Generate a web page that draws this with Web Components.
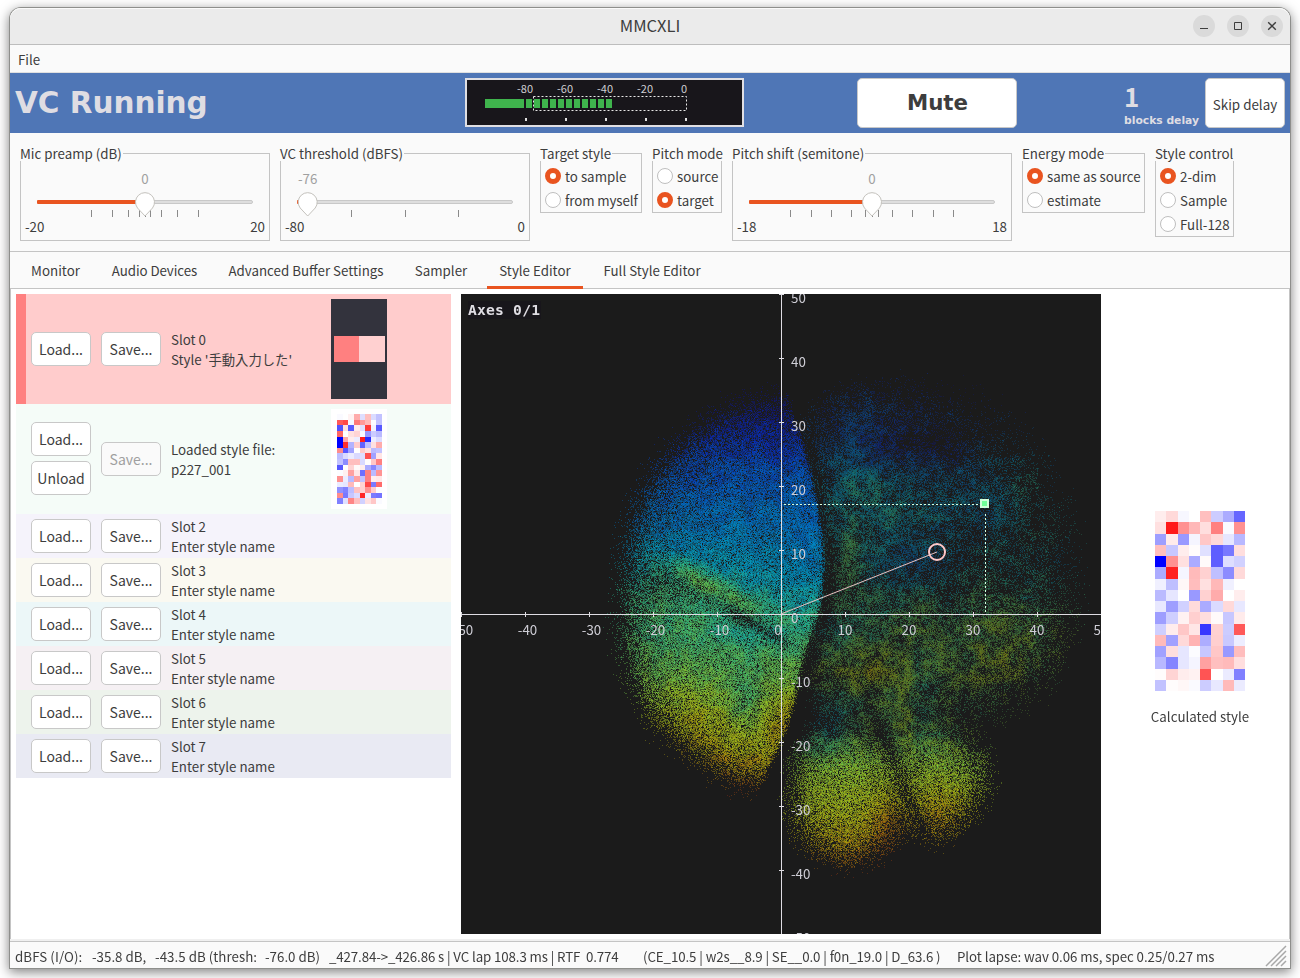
<!DOCTYPE html>
<html lang="en">
<head>
<meta charset="utf-8">
<title>MMCXLI</title>
<style>
html,body{margin:0;height:100%;background:#fff;overflow:hidden}
body{font:13.330px/20px "Noto Sans CJK JP","Noto Sans",sans-serif;color:#3d3d3d}
</style>
</head>
<body>
<mm-window></mm-window>
<script>
const define = (name, html, setup) => customElements.define(name, class extends HTMLElement {
  constructor() { super(); this.attachShadow({ mode: 'open' }); }
  connectedCallback() {
    const t = document.createElement('template');
    t.innerHTML = typeof html === 'function' ? html(this) : html;
    this.shadowRoot.replaceChildren(t.content.cloneNode(true));
    if (setup) setup(this, this.shadowRoot);
  }
});

/* ---------- title bar ---------- */
define('mm-titlebar', `<style>
:host{display:grid;grid-template-columns:1fr auto 1fr;align-items:center;height:36px;background:#ebebeb;border-bottom:1px solid #bdbdbd;box-shadow:inset 0 1px #fafafa;border-radius:11px 11px 0 0}
.t{font-size:16.500px;line-height:24px;padding-bottom:2px}
.b{display:flex;gap:12px;justify-content:flex-end;padding-right:7px}
svg{display:block}
</style><span></span><span class="t"><slot></slot></span>
<div class="b">
<svg width="22" height="22"><circle cx="11" cy="11" r="11" fill="#dadada"/><path d="M7 13.5h8" stroke="#3d3d3d"/></svg>
<svg width="22" height="22"><circle cx="11" cy="11" r="11" fill="#dadada"/><path d="M7.5 7.5h7v7h-7z" fill="none" stroke="#3d3d3d"/></svg>
<svg width="22" height="22"><circle cx="11" cy="11" r="11" fill="#dadada"/><path d="M7.2 7.2l7.6 7.6M14.8 7.2l-7.6 7.6" stroke="#3d3d3d" stroke-width="1.4"/></svg>
</div>`);

/* ---------- button ---------- */
define('mm-button', `<style>
:host{display:flex;box-sizing:border-box;width:60px;height:34px;align-items:center;justify-content:center;background:#fff;border:1px solid #c8c8c8;border-radius:5px;padding-bottom:1px;white-space:nowrap;font-size:14px}
:host([disabled]){background:#fafafa;color:#a0a0a0}
</style><slot></slot>`);

/* ---------- level meter ---------- */
define('mm-meter', () => {
  let s = '';
  for (let i = 0; i <= 10; i++) s += `<rect x="${61 + 8 * i}" y="21" width="6" height="9" fill="#3fb44d"/>`;
  [-80, -60, -40, -20, 0].forEach((v, i) => {
    s += `<text x="${[60, 100, 140, 180, 219][i]}" y="15" text-anchor="middle">${v}</text><rect x="${60 + 40 * i}" y="40" width="2" height="3" fill="#e0e0e0"/>`;
  });
  return `<style>:host{display:block;width:279px;height:49px}svg{display:block}text{font-size:11px;fill:#cfced3}</style>
<svg width="279" height="49"><rect x="1" y="1" width="277" height="47" fill="#18161b" stroke="#e0dfe3" stroke-width="2"/>
<rect x="20" y="21" width="39" height="9" fill="#3fb44d"/>${s}
<rect x="68.500" y="18.500" width="153" height="14" fill="none" stroke="#e8e8e8" stroke-dasharray="2 2"/></svg>`;
});

/* ---------- status banner ---------- */
define('mm-banner', `<style>
:host{display:grid;grid-template-columns:455px 392px 267px 1fr;height:60px;background:#4f76b6;color:#dfdde3;align-items:start;border-top:1px solid #e0e0e0}
h1{margin:0;font:bold 29.500px/36px "DejaVu Sans",sans-serif;padding:12px 0 0 5px}
mm-meter{margin-top:5px}
mm-button{margin-top:5px;height:50px;color:#3d3d3d}
.mute{width:160px;font:bold 21.330px/26px "DejaVu Sans",sans-serif;padding:0 0 0 1px}
.n b{display:block;font-size:26px;line-height:30px;padding-top:8px}
.n small{display:block;font:bold 10.750px/13px "DejaVu Sans",sans-serif;padding-top:3px;white-space:nowrap}
.d{display:grid;grid-template-columns:81px 80px}
.skip{width:80px;padding:1px 0 0;font-size:13.400px}
</style><h1>VC Running</h1><mm-meter></mm-meter><mm-button class="mute">Mute</mm-button>
<div class="d"><div class="n"><b>1</b><small>blocks delay</small></div><mm-button class="skip">Skip delay</mm-button></div>`);

/* ---------- group frame, radios, slider ---------- */
define('mm-group', `<style>
:host{display:block;position:relative;box-sizing:border-box;border:1px solid #c4c4c4}
.t{position:absolute;left:-1px;top:-11px;height:18px;line-height:22px;background:#fafafa;white-space:nowrap;padding-right:1px}
</style><span class="t"></span><slot></slot>`, (h, r) => r.querySelector('.t').textContent = h.getAttribute('label'));

define('mm-radio', `<style>
:host{display:flex;align-items:center;gap:4px;height:24px;padding-left:4px;white-space:nowrap}
i{box-sizing:border-box;flex:none;width:16px;height:16px;border-radius:50%;border:1px solid #bfbfbf;background:#fff}
:host([checked]) i{border:5.500px solid #e95420}
span{padding-top:2px}
</style><i></i><span><slot></slot></span>`);

define('mm-slider', h => {
  const a = n => h.getAttribute(n), w = +a('w'), x = +a('at');
  const ticks = a('ticks').split(' ').map(t => `<rect x="${t}" y="56" width="1" height="7" fill="#8a8a8a"/>`).join('');
  return `<style>:host{display:block}svg{display:block;overflow:visible}text{fill:#3d3d3d}</style>
<svg width="${w - 2}" height="86">${ticks}
<rect x="16.500" y="46.500" width="${w - 35}" height="3" rx="1.500" fill="#dedede" stroke="#c8c8c8"/>
<rect x="16" y="46" width="${x - 16}" height="4" rx="1" fill="#e95420"/>
<path d="M${x} 62L${x - 7.500} 54A9.500 9.500 0 1 1 ${x + 7.500} 54Z" fill="#fff" stroke="#c4c2bd"/>
<text x="${x}" y="30" text-anchor="middle" style="fill:#a0a0a0">${a('value')}</text>
<text x="4" y="78">${a('min')}</text><text x="${w - 6}" y="78" text-anchor="end">${a('max')}</text></svg>`;
});

define('mm-controls', `<style>
:host{display:flex;gap:10px;align-items:flex-start;height:98px;padding:20px 10px 0}
.s{width:250px;height:88px}.r{height:60px}
mm-radio:first-of-type{margin-top:10px}
</style>
<mm-group class="s" label="Mic preamp (dB)"><mm-slider w="250" at="124" value="0" min="-20" max="20" ticks="70 91 107 118 124 129 140 156 177"></mm-slider></mm-group>
<mm-group class="s" label="VC threshold (dBFS)"><mm-slider w="250" at="26.700" value="-76" min="-80" max="0" ticks="70 124 177"></mm-slider></mm-group>
<mm-group class="r" style="width:102px" label="Target style"><mm-radio checked>to sample</mm-radio><mm-radio style="letter-spacing:-.1px">from myself</mm-radio></mm-group>
<mm-group class="r" style="width:70px" label="Pitch mode"><mm-radio>source</mm-radio><mm-radio checked>target</mm-radio></mm-group>
<mm-group class="s" style="width:280px" label="Pitch shift (semitone)"><mm-slider w="280" at="139" value="0" min="-18" max="18" ticks="57 78 98 118 132 139 145 159 179 200 220"></mm-slider></mm-group>
<mm-group class="r" style="width:123px" label="Energy mode"><mm-radio checked style="letter-spacing:-.07px">same as source</mm-radio><mm-radio>estimate</mm-radio></mm-group>
<mm-group class="r" style="width:79px;height:84px" label="Style control"><mm-radio checked>2-dim</mm-radio><mm-radio>Sample</mm-radio><mm-radio>Full-128</mm-radio></mm-group>`);

/* ---------- tabs ---------- */
define('mm-tabs', `<style>
:host{display:flex;box-sizing:border-box;height:38px;border-top:1px solid #c4c4c4;border-bottom:1px solid #c4c4c4;padding-left:9px}
span{box-sizing:border-box;height:37px;line-height:38px;text-align:center;white-space:nowrap}
.on{border-bottom:3px solid #e95420}
</style><span style="width:73px">Monitor</span><span style="width:125px;letter-spacing:-.08px">Audio Devices</span><span style="width:178px">Advanced Buffer Settings</span><span style="width:92px">Sampler</span><span class="on" style="width:96px">Style Editor</span><span style="width:138px">Full Style Editor</span>`);

/* ---------- heat map ---------- */
const MAPS = {
  file: [[-2,0,5,33,-13,25,-14,-24],[65,72,-3,53,40,28,-1,-24],[-68,12,-65,8,-12,78,-5,-65],[60,0,12,17,-2,-40,-20,-27],[-100,35,7,-7,88,-83,-7,-14],[-100,82,-30,20,-62,-25,12,33],[45,-65,-37,0,20,12,-27,-24],[-26,-14,-8,-15,-13,68,-37,10],[-24,-45,25,25,-15,1,22,50],[-66,0,17,2,7,-33,-47,-27],[-1,6,37,10,-57,50,-27,42],[43,-7,-27,37,-24,50,7,9],[-8,-10,27,0,17,72,-52,58],[-43,-50,-26,24,18,43,20,-1],[45,-53,-22,-14,85,-7,-52,-55],[-50,-12,48,25,-18,12,22,-2]],
  calc: [[7,15,-3,0,25,-20,-33,-60],[12,90,43,28,13,50,-2,43],[-38,8,-40,-4,22,15,-10,-28],[25,-22,7,1,-12,-63,-53,13],[-100,43,12,-33,2,-63,-13,-18],[-33,87,-4,27,18,-25,-45,15],[-6,-25,3,26,12,28,-6,0],[-27,-10,0,-40,18,33,0,7],[-9,-38,-18,14,-33,-14,15,-9],[-38,-19,5,19,13,2,-22,8],[-19,7,22,10,-78,18,-20,65],[27,-37,15,30,-32,19,-21,-7],[-37,13,-10,-1,-22,22,-40,26],[-28,-48,-10,-4,37,25,27,13],[1,17,7,5,67,0,-8,-50],[-24,1,3,-2,-20,-9,27,-8]]
};
define('mm-heat', h => {
  const w = +h.getAttribute('w'), c = w / 8;
  const cells = MAPS[h.getAttribute('map')].map((row, y) => row.map((v, x) => {
    const k = Math.round(255 * (1 - Math.abs(v) / 100));
    return `<rect x="${x * c}" y="${y * c}" width="${c}" height="${c}" fill="${v > 0 ? `rgb(255,${k},${k})` : `rgb(${k},${k},255)`}"/>`;
  }).join('')).join('');
  return `<style>:host{display:block}svg{display:block}</style><svg width="${w}" height="${w * 2}" shape-rendering="crispEdges">${cells}</svg>`;
});

/* ---------- slot row ---------- */
define('mm-slot', `<style>
:host{display:grid;grid-template-columns:10px 65px 75px 165px 91px;align-items:center;height:44px;background:var(--bg)}
:host([tall]){height:110px}
.bar{align-self:stretch;background:var(--bar,transparent)}
.l{display:grid;gap:5px;margin-left:5px}
:host([pair]) .l{padding-bottom:1px}
.s{margin-left:10px}
.t{white-space:pre;margin-left:5px;padding-top:2px}
</style><div class="bar"></div><div class="l"><slot name="load"></slot></div><div class="s"><slot name="save"></slot></div><div class="t"><slot></slot></div><div class="p"><slot name="thumb"></slot></div>`);

define('mm-slots', () => {
  const bg = ['#f5f3fb', '#faf9f1', '#ecf7f8', '#f5f0f3', '#edf3ec', '#e9eaf3'];
  return `<style>
:host{display:block;width:435px}
.sw{box-sizing:border-box;width:56px;height:100px;background:#33333d;padding:37px 2px 37px 3px;display:grid;grid-template-columns:25px 26px}
.wh{box-sizing:border-box;width:56px;height:100px;background:#fff;padding:5px 6px}
</style>
<mm-slot tall style="--bg:#fcc;--bar:#ff8080"><mm-button slot="load">Load...</mm-button><mm-button slot="save">Save...</mm-button>Slot 0
Style '手動入力した'<div slot="thumb" class="sw"><i style="background:#ff8080"></i><i style="background:#ffd0d0"></i></div></mm-slot>
<mm-slot tall pair style="--bg:#f5fcf8"><mm-button slot="load">Load...</mm-button><mm-button slot="load">Unload</mm-button><mm-button slot="save" disabled>Save...</mm-button>Loaded style file:
p227_001<div slot="thumb" class="wh"><mm-heat w="45" map="file"></mm-heat></div></mm-slot>` +
    bg.map((c, i) => `<mm-slot style="--bg:${c}"><mm-button slot="load">Load...</mm-button><mm-button slot="save">Save...</mm-button>Slot ${i + 2}
Enter style name</mm-slot>`).join('');
});

/* ---------- scatter plot ---------- */
const JET = [[0,14,14,140],[.12,6,50,200],[.26,0,105,205],[.4,0,155,195],[.5,35,185,150],[.6,85,195,95],[.7,145,200,45],[.8,180,185,15],[.9,185,120,10],[1,150,35,20]];
const ramp = (tab, v) => {
  if (v <= tab[0][0]) return tab[0].slice(1);
  for (let i = 1; i < tab.length; i++) if (v <= tab[i][0]) {
    const a = tab[i - 1], b = tab[i], k = (v - a[0]) / (b[0] - a[0]);
    return a.slice(1).map((c, j) => c + (b[j + 1] - c) * k);
  }
  return tab[tab.length - 1].slice(1);
};
function paintCloud(cv) {
  const N = 640, OX = 461, OY = 294;
  let seed = 20231;
  const rnd = () => { seed = (seed + 0x6D2B79F5) | 0; let t = Math.imul(seed ^ seed >>> 15, 1 | seed); t = t + Math.imul(t ^ t >>> 7, 61 | t) ^ t; return ((t ^ t >>> 14) >>> 0) / 4294967296; };
  const layer = (shapes) => {
    const c = document.createElement('canvas'); c.width = c.height = N;
    const g = c.getContext('2d', { willReadFrequently: true });
    g.fillStyle = '#000'; g.fillRect(0, 0, N, N);
    g.translate(-OX, -OY);
    for (const [kind, val, blur, pts, width] of shapes) {
      g.filter = `blur(${blur}px)`;
      g.fillStyle = g.strokeStyle = val < 0 ? `rgba(0,0,0,${-val})` : `rgba(255,255,255,${val})`;
      g.beginPath();
      if (kind === 'e') g.ellipse(pts[0], pts[1], pts[2], pts[3], pts[4] || 0, 0, 7);
      else {
        const n = pts.length / 2;
        if (kind === 'p') {
          const m = i => [(pts[(i % n) * 2] + pts[((i + 1) % n) * 2]) / 2, (pts[(i % n) * 2 + 1] + pts[((i + 1) % n) * 2 + 1]) / 2];
          g.moveTo(...m(0));
          for (let i = 1; i <= n; i++) g.quadraticCurveTo(pts[(i % n) * 2], pts[(i % n) * 2 + 1], ...m(i));
        } else for (let i = 0; i < n; i++) g.lineTo(pts[i * 2], pts[i * 2 + 1]);
      }
      if (kind === 'l') { g.lineWidth = width; g.lineCap = 'round'; g.stroke(); } else g.fill();
    }
    return g.getImageData(0, 0, N, N).data;
  };
  /* left lobe: soft outer rim, crisp inner rim cut by a second shape */
  const wide = [790,402, 735,412, 682,450, 645,502, 633,560, 630,620, 636,670, 660,718, 705,758, 755,782, 810,780, 870,700, 890,560, 860,420];
  const cut = [782,370, 560,360, 540,830, 740,830, 762,785, 770,765, 787,728, 796,690, 803,650, 819,612, 824,560, 817,505, 804,450, 790,405];
  const A = layer([['p',.5,16,wide],['p',.6,20,[790,435,710,462,665,518,656,590,664,660,696,715,755,765,800,720,860,560]],
    ['e',-.42,12,[662,590,26,22,.5]],
    ['l',-.6,7,[655,574,705,596,750,620],9],['l',-.85,5,[730,612,762,628,786,644],11],
    ['l',.7,4,[662,558,712,580,752,608],6],
    ['l',.6,5,[700,620,745,636,795,660],8],
    ['l',.6,9,[720,520,765,585,790,622],22],
    ['l',.4,8,[670,625,740,650],14],['e',.35,16,[690,690,40,25,.5]],
    ['l',.45,5,[700,700,745,662,780,645],6],['l',.6,4,[758,765,771,715,784,665],7],['l',.5,5,[725,760,752,700,772,660],6],
    ['l',-.5,3,[745,730,762,690,774,660],4],['l',-.45,3,[722,735,745,695,766,662],4],['l',-.4,3,[766,745,773,715,780,680],3]]);
  const K = layer([['p',1,2.5,cut]]);
  const B = layer([['e',.13,30,[920,555,130,150,-.1]],['e',.14,28,[960,620,95,80]],
    ['e',.36,17,[852,485,36,82,-.05]],['e',.26,18,[895,520,52,60]],['e',.38,18,[870,665,62,58]],['e',.26,16,[1000,640,48,30]],
    ['e',.2,18,[980,500,46,34,.5]],['e',.12,16,[890,425,38,26,.5]],['e',.16,18,[940,665,42,38]],
    ['l',.35,9,[893,690,907,740],26],
    ['e',.8,14,[850,798,47,54,.15]],['e',.45,12,[835,762,34,30]],['e',.3,12,[850,805,30,30]],
    ['p',.7,14,[895,725,925,718,958,745,985,772,968,802,935,838,915,810]],['e',.4,10,[937,788,24,26]],
    ['l',-.85,4,[866,690,882,735,900,775,924,830],7],
    ['l',-.6,10,[804,650,808,700,802,730],16],['e',-.25,12,[866,722,40,9,.1]],
    ['l',-.88,5,[808,445,821,495,831,555,827,612,810,660,803,705],12],
    ['e',-.5,10,[960,588,34,14,-.6]],['e',-.4,10,[950,548,26,12]],['e',-.3,12,[1000,560,35,15]]]);
  const noiseGrid = s => {
    const n = Math.ceil(N / s) + 2, a = Float32Array.from({ length: n * n }, rnd);
    return (x, y) => { const fx = x / s, fy = y / s, ix = fx | 0, iy = fy | 0, u = fx - ix, v = fy - iy, i = iy * n + ix;
      return (a[i] * (1 - u) + a[i + 1] * u) * (1 - v) + (a[i + n] * (1 - u) + a[i + n + 1] * u) * v; };
  };
  const n3 = noiseGrid(3), n9 = noiseGrid(8), n22 = noiseGrid(22), n40 = noiseGrid(38);
  const TL = [[385,0],[425,.07],[470,.2],[520,.3],[560,.39],[600,.48],[625,.54],[660,.61],[700,.69],[740,.79],[775,.88],[800,.97]];
  const TR = [[380,.06],[430,.2],[480,.34],[560,.44],[600,.53],[650,.58],[700,.59],[735,.62],[770,.7],[810,.77],[845,.85],[880,.97]];
  const blob = (x, y, cx, cy, rx, ry) => Math.exp(-(((x - cx) / rx) ** 2 + ((y - cy) / ry) ** 2));
  const g = cv.getContext('2d'), im = g.createImageData(N, N), D = im.data;
  for (let y = 0; y < N; y++) for (let x = 0; x < N; x++) {
    const i = (y * N + x) * 4, px = x + OX, py = y + OY;
    let a = A[i] / 255 * K[i] / 255;
    let b = B[i] / 255;
    const f = n9(x, y), m = n22(x, y), l = n40(x, y), s = n3(x, y);
    a = Math.max(0, a - .012) * (.75 + .3 * s + .2 * f);
    if (a < .35) a *= .45 + 1.57 * a;
    const lower = Math.min(1, Math.max(0, (py - 725) / 40));
    b = Math.max(0, b - .01) * ((1 - lower) * (.08 + 1.5 * s * s + 1.6 * f * f + .6 * m) + lower * (.8 + .3 * s));
    const left = a > b * .8 || (px < 800 && py < 740);
    const lam = a * 3.2 + b * 2.9;
    let k = 0, p = Math.exp(-lam), q = p, u = rnd();
    while (u > q && k < 9) { k++; p *= lam / k; q += p; }
    let t;
    if (left) t = ramp(TL, py)[0] + (f - .5) * .07 + (rnd() - .5) * .06
        + .09 * blob(px, py, 660, 590, 50, 35) + .13 * blob(px - (py - 585) * 1.6, py, 712, 585, 22, 28)
        - .07 * blob(px, py, 755, 635, 38, 13) - .09 * blob(px, py, 745, 700, 18, 35) - .06 * blob(px, py, 805, 560, 20, 50) + .1 * blob(px, py, 785, 715, 20, 22) + .05 * blob(px, py, 685, 720, 30, 40);
    else t = ramp(TR, py)[0] + (1 - lower) * ((f - .5) * .16 + (l - .5) * .2) + (rnd() - .5) * .09
        + .13 * blob(px, py, 850, 535, 18, 60) - .15 * blob(px, py, 915, 565, 35, 35) - .16 * blob(px, py, 925, 450, 40, 28)
        + .13 * blob(px, py, 1005, 635, 45, 35) + .07 * blob(px, py, 880, 670, 40, 30) + .09 * blob(px, py, 888, 830, 20, 40) + .07 * blob(px, py, 940, 810, 35, 30)
        + .12 * blob(px, py, 905, 710, 14, 30) - .1 * blob(px, py, 825, 725, 25, 30) + .05 * blob(px, py, 1010, 490, 40, 25);
    const v = (1 - Math.pow(.62, k)) * (left ? 1 : .6 + .4 * lower), c = ramp(JET, t);
    D[i] = 27 + (c[0] - 27) * v; D[i + 1] = 27 + (c[1] - 27) * v; D[i + 2] = 27 + (c[2] - 27) * v; D[i + 3] = 255;
  }
  g.putImageData(im, 0, 0);
}
define('mm-plot', () => {
  let s = '';
  for (let v = -50; v <= 50; v += 10) {
    const x = 320 + v * 6.4, y = 320 - v * 6.4;
    s += `<path d="M${x + .5} 318v5M318 ${y + .5}h5"/>`;
    s += `<text x="${v ? x + (v < 0 ? 2.5 : 0) : 317}" y="341" text-anchor="middle">${v}</text>`;
    s += `<text x="330" y="${y + 9}">${v}</text>`;
  }
  return `<style>
:host{display:grid;width:640px;height:640px;overflow:hidden}
canvas,svg{grid-area:1/1;display:block}
path{fill:none;stroke:#dfdde3}
text{fill:#cfced6}
.m{font:bold 14.670px "DejaVu Sans Mono",monospace;fill:#dfdde3}
</style><canvas width="640" height="640"></canvas>
<svg width="640" height="640"><rect x="7" y="7" width="73" height="18" fill="#18161b"/><text class="m" x="7" y="21" textLength="72">Axes 0/1</text>
<path d="M0 320.500H640M320.500 0V640"/>${s}
<path d="M323 210.500H519M524.500 220V320" style="stroke:#d5ffe0;stroke-dasharray:2 2"/>
<path d="M320 320L476 258" style="stroke:#e8c0c0"/><circle cx="476" cy="258" r="8" fill="none" stroke="#ffc8c8" stroke-width="2"/>
<rect x="519" y="205" width="9" height="9" fill="#d0ffdc"/><rect x="521" y="207" width="5" height="5" fill="#70ff98"/></svg>`;
}, (h, r) => paintCloud(r.querySelector('canvas')));

define('mm-editor', `<style>
:host{display:grid;grid-template-columns:435px 640px 178px;column-gap:10px;flex:1;background:#fff;padding:5px 0 0 5px;border:solid #c4c4c4;border-width:0 1px 0 1px}
.c{display:flex;flex-direction:column;align-items:center;padding-top:217px}
.c span{padding-top:16px}
</style><mm-slots></mm-slots><mm-plot></mm-plot><div class="c"><mm-heat w="90" map="calc"></mm-heat><span>Calculated style</span></div>`);

/* ---------- status bar ---------- */
define('mm-status', `<style>
:host{display:flex;height:26px;border-top:1px solid #c4c4c4;padding-left:5px;line-height:29px;white-space:pre;overflow:hidden}
svg{margin:3px 3px 0 auto}
</style><span style="width:77px;letter-spacing:.07px">dBFS (I/O):</span><span style="width:63px">-35.8 dB,</span><span style="width:110px;letter-spacing:.03px">-43.5 dB (thresh:</span><span style="width:64px">-76.0 dB)</span><span style="width:314px;letter-spacing:-.13px">_427.84-&gt;_426.86 s | VC lap 108.3 ms | RTF  0.774</span><span style="width:314px;letter-spacing:-.1px">(CE_10.5 | w2s__8.9 | SE__0.0 | f0n_19.0 | D_63.6 )</span><span style="letter-spacing:-.07px">Plot lapse: wav 0.06 ms, spec 0.25/0.27 ms</span>
<svg width="22" height="22"><path d="M1 21L21 1M6 21L21 6M11 21L21 11M16 21L21 16" stroke="#a8a8a8" stroke-width="1.500"/></svg>`);

define('mm-window', `<style>
:host{display:flex;flex-direction:column;box-sizing:border-box;width:1280px;height:960px;margin:8px 10px 10px;background:#fafafa;border-radius:11px 11px 0 0;box-shadow:0 0 0 1px #8e8f8c,0 3px 12px 1px rgba(0,0,0,.5)}
.menu{height:27px;line-height:30px;padding-left:8px}
.line{height:2px;background:#f0f0f0}
</style><mm-titlebar>MMCXLI</mm-titlebar><div class="menu">File</div><mm-banner></mm-banner><mm-controls></mm-controls><mm-tabs></mm-tabs><mm-editor></mm-editor><div class="line"></div><mm-status></mm-status>`);
</script>
</body>
</html>
